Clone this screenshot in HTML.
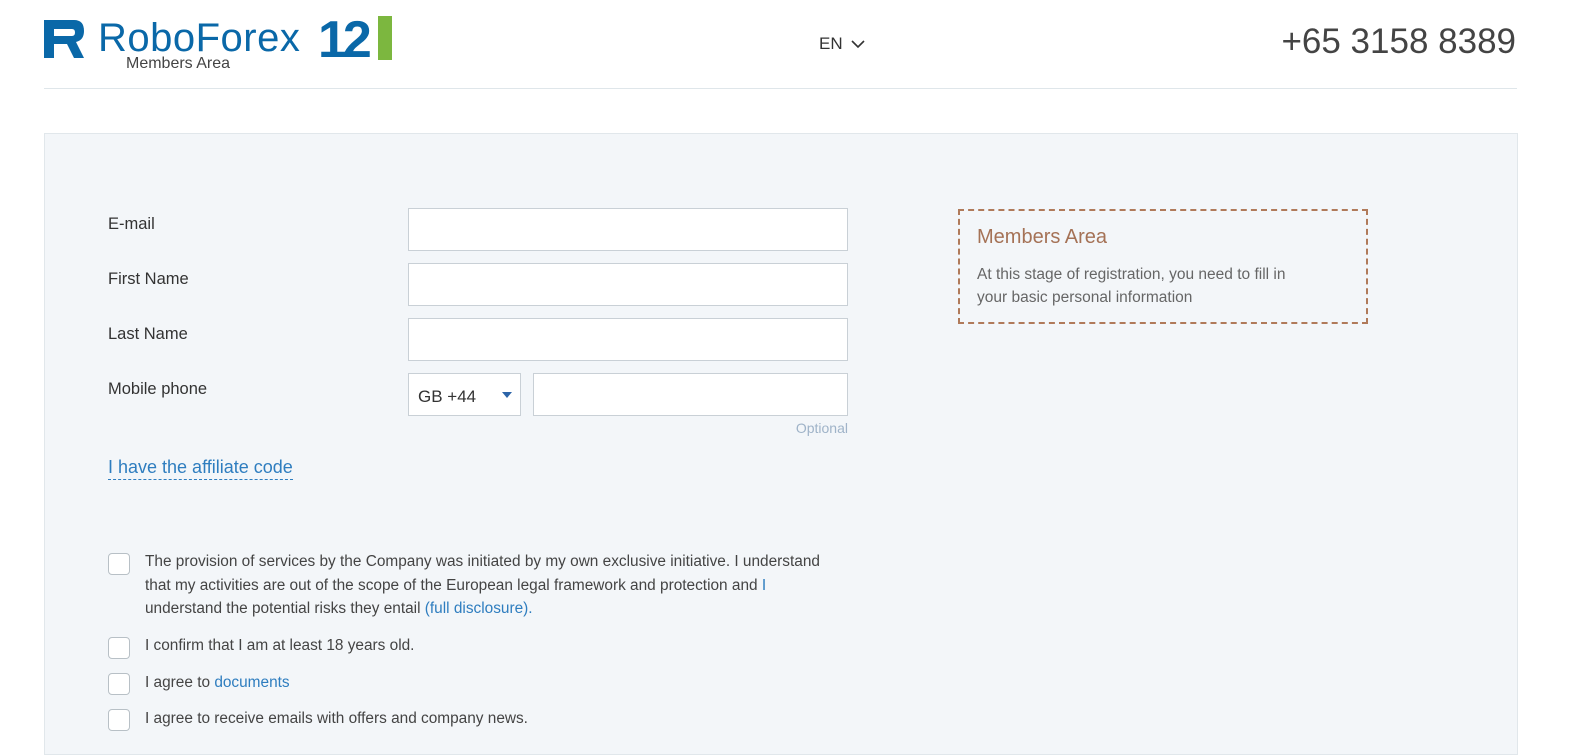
<!DOCTYPE html>
<html><head><meta charset="utf-8"><style>
body{margin:0;width:1570px;height:745px;overflow:hidden;background:#fff;font-family:"Liberation Sans","DejaVu Sans",sans-serif;color:#333;position:relative}
.a{position:absolute}
.inp{position:absolute;background:#fff;border:1px solid #c9d0d6;box-sizing:border-box}
.lbl{position:absolute;left:108px;font-size:16.5px;color:#333}
.cb{position:absolute;left:108px;width:22px;height:22px;border:1px solid #b8c0c6;border-radius:4px;background:#fff;box-sizing:border-box}
.t{position:absolute;left:145px;font-size:15.4px;color:#444;line-height:23.5px;white-space:nowrap}
a{color:#2e7dbf;text-decoration:none}
</style></head><body>
<svg class="a" style="left:44px;top:20px" width="44" height="40" viewBox="0 0 44 40"><path d="M0 0H30Q40 0 40 11Q40 20 32 22L40 38H30L23 24H10V38H0Z M10 9V16H28Q31 16 31 12.5Q31 9 28 9Z" fill="#0a68a8" fill-rule="evenodd"/></svg>
<div class="a" style="left:98px;top:16px;font-size:40px;color:#0a68a8;letter-spacing:0.5px">RoboForex</div>
<div class="a" style="left:318px;top:10px;font-size:52px;font-weight:bold;color:#0a68a8;letter-spacing:-4px">12</div>
<div class="a" style="left:378px;top:16px;width:14px;height:44px;background:#7cb73f"></div>
<div class="a" style="left:126px;top:55px;font-size:16px;color:#444">Members Area</div>
<div class="a" style="left:819px;top:34px;font-size:17px;color:#333">EN</div>
<svg class="a" style="left:851px;top:39px" width="14" height="10"><path d="M1 2L7 8L13 2" stroke="#333" stroke-width="1.6" fill="none"/></svg>
<div class="a" style="right:54px;top:22px;font-size:35px;color:#444">+65 3158 8389</div>
<div class="a" style="left:44px;top:88px;width:1473px;height:1px;background:#dfe6ea"></div>
<div class="a" style="left:44px;top:133px;width:1472px;height:620px;background:#f3f6f9;border:1px solid #e1e7eb"></div>
<div class="lbl" style="top:215px">E-mail</div>
<div class="lbl" style="top:270px">First Name</div>
<div class="lbl" style="top:325px">Last Name</div>
<div class="lbl" style="top:380px">Mobile phone</div>
<div class="inp" style="left:408px;top:208px;width:440px;height:43px"></div>
<div class="inp" style="left:408px;top:263px;width:440px;height:43px"></div>
<div class="inp" style="left:408px;top:318px;width:440px;height:43px"></div>
<div class="inp" style="left:408px;top:373px;width:113px;height:43px;font-size:17px;padding:13px 0 0 9px">GB +44</div>
<svg class="a" style="left:502px;top:392px" width="10" height="6"><path d="M0 0H10L5 6Z" fill="#2c64a8"/></svg>
<div class="inp" style="left:533px;top:373px;width:315px;height:43px"></div>
<div class="a" style="right:722px;top:420px;font-size:14px;color:#9fb3c8">Optional</div>
<div class="a" style="left:108px;top:457px;font-size:18px;color:#2e7dbf;border-bottom:1px dashed #2e7dbf;padding-bottom:1px">I have the affiliate code</div>
<div class="a" style="left:958px;top:209px;width:410px;height:115px;border:2px dashed #b07a5a;box-sizing:border-box"></div>
<div class="a" style="left:977px;top:226px;font-size:20px;color:#a57256">Members Area</div>
<div class="a" style="left:977px;top:263px;font-size:15.5px;color:#666;line-height:23px">At this stage of registration, you need to fill in<br>your basic personal information</div>
<div class="cb" style="top:553px"></div>
<div class="t" style="top:550px">The provision of services by the Company was initiated by my own exclusive initiative. I understand<br>that my activities are out of the scope of the European legal framework and protection and <a>I</a><br>understand the potential risks they entail <a>(full disclosure).</a></div>
<div class="cb" style="top:637px"></div>
<div class="t" style="top:634px">I confirm that I am at least 18 years old.</div>
<div class="cb" style="top:673px"></div>
<div class="t" style="top:671px">I agree to <a>documents</a></div>
<div class="cb" style="top:709px"></div>
<div class="t" style="top:707px">I agree to receive emails with offers and company news.</div>
</body></html>
